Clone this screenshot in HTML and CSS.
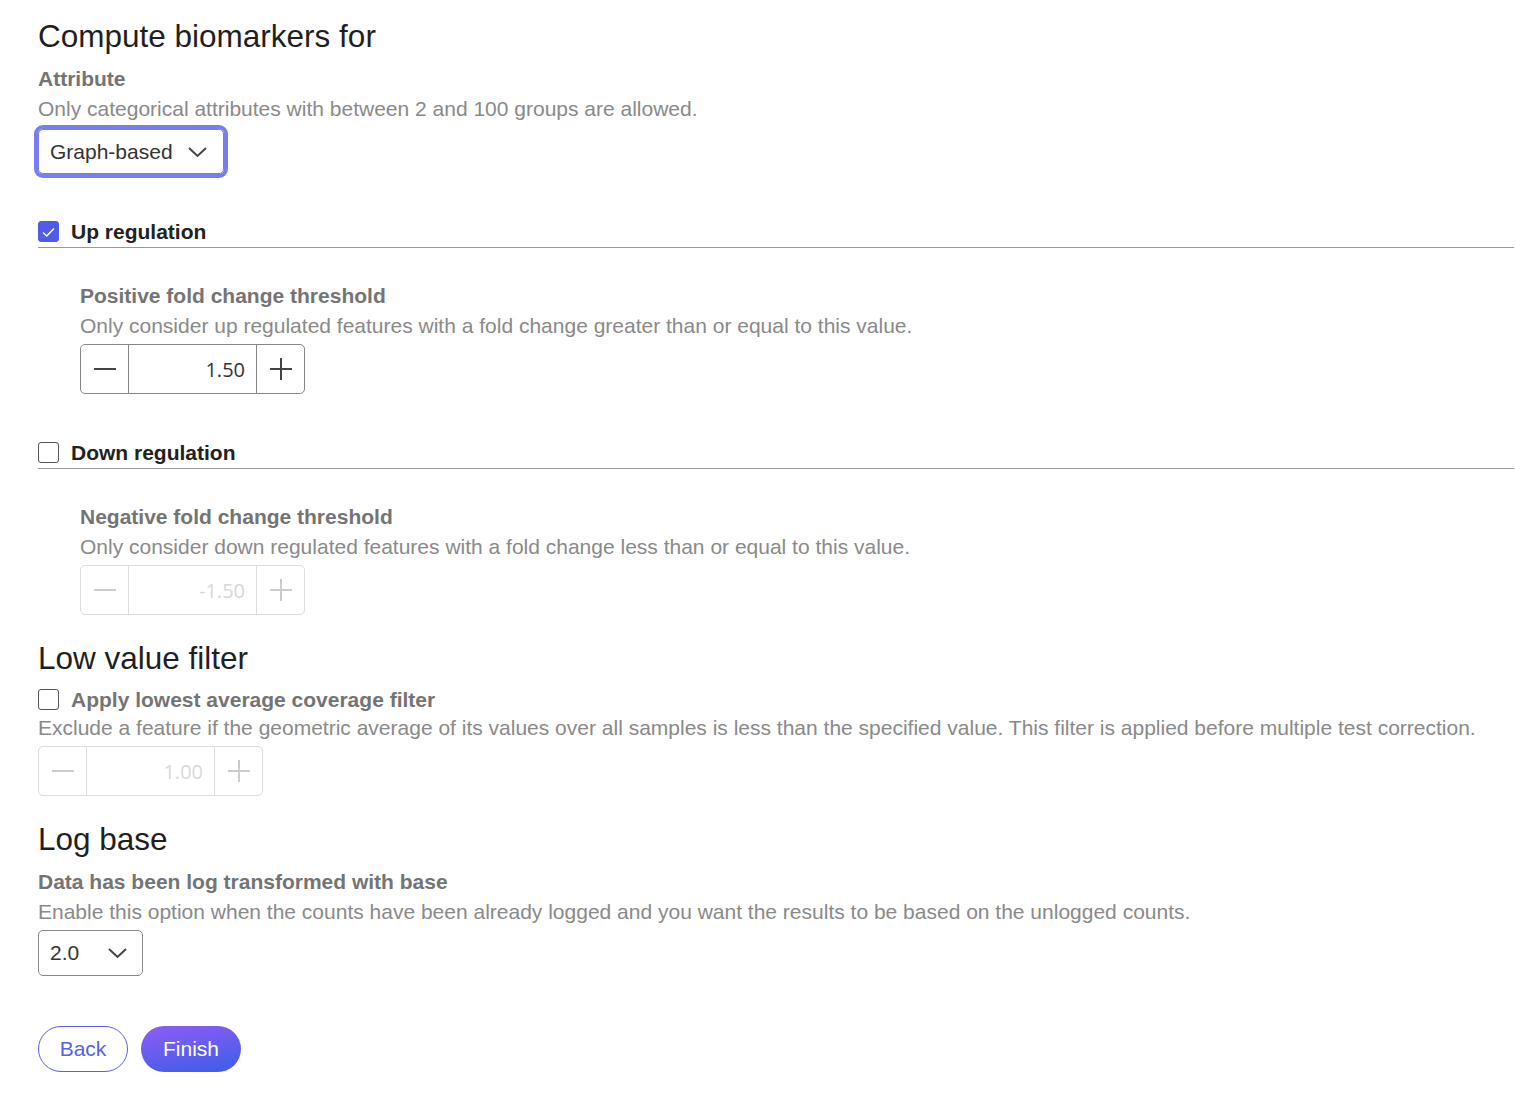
FILE: index.html
```html
<!DOCTYPE html>
<html lang="en">
  <head>
    <title>Compute biomarkers</title>
    <meta charset="utf-8">
    <link rel="stylesheet" href="styles.css">
  </head>
  <body>
  <div class="page">

    <h2 class="heading">Compute biomarkers for</h2>
    <div class="label">Attribute</div>
    <div class="desc">Only categorical attributes with between 2 and 100 groups are allowed.</div>
    <div class="select focused">
      <span>Graph-based</span>
      <svg class="chevron" width="19" height="12" viewBox="0 0 19 12"><path d="M1 2 L9.5 10 L18 2" fill="none" stroke="#444" stroke-width="2"/></svg>
    </div>

    <div class="check-row section first">
      <span class="box checked">
        <svg width="15" height="12" viewBox="0 0 15 12"><path d="M2 6.5 L5.8 10 L13 2.5" fill="none" stroke="#fff" stroke-width="1.6"/></svg>
      </span>
      <span class="check-title">Up regulation</span>
    </div>
    <div class="indent">
      <div class="label">Positive fold change threshold</div>
      <div class="desc">Only consider up regulated features with a fold change greater than or equal to this value.</div>
      <div class="stepper">
        <span class="step"><svg width="22" height="22" viewBox="0 0 22 22"><path d="M0 11 H22" stroke="#444" stroke-width="2"/></svg></span>
        <span class="value">1.50</span>
        <span class="step"><svg width="22" height="22" viewBox="0 0 22 22"><path d="M0 11 H22 M11 0 V22" stroke="#444" stroke-width="2"/></svg></span>
      </div>
    </div>

    <div class="check-row section">
      <span class="box"></span>
      <span class="check-title">Down regulation</span>
    </div>
    <div class="indent">
      <div class="label">Negative fold change threshold</div>
      <div class="desc">Only consider down regulated features with a fold change less than or equal to this value.</div>
      <div class="stepper disabled">
        <span class="step"><svg width="22" height="22" viewBox="0 0 22 22"><path d="M0 11 H22" stroke="#ccc" stroke-width="2"/></svg></span>
        <span class="value">-1.50</span>
        <span class="step"><svg width="22" height="22" viewBox="0 0 22 22"><path d="M0 11 H22 M11 0 V22" stroke="#ccc" stroke-width="2"/></svg></span>
      </div>
    </div>

    <h2 class="heading spaced">Low value filter</h2>
    <div class="check-row plain">
      <span class="box"></span>
      <span class="label">Apply lowest average coverage filter</span>
    </div>
    <div class="desc">Exclude a feature if the geometric average of its values over all samples is less than the specified value. This filter is applied before multiple test correction.</div>
    <div class="stepper disabled">
      <span class="step"><svg width="22" height="22" viewBox="0 0 22 22"><path d="M0 11 H22" stroke="#ccc" stroke-width="2"/></svg></span>
      <span class="value">1.00</span>
      <span class="step"><svg width="22" height="22" viewBox="0 0 22 22"><path d="M0 11 H22 M11 0 V22" stroke="#ccc" stroke-width="2"/></svg></span>
    </div>

    <h2 class="heading spaced">Log base</h2>
    <div class="label">Data has been log transformed with base</div>
    <div class="desc">Enable this option when the counts have been already logged and you want the results to be based on the unlogged counts.</div>
    <div class="select small">
      <span>2.0</span>
      <svg class="chevron" width="19" height="12" viewBox="0 0 19 12"><path d="M1 2 L9.5 10 L18 2" fill="none" stroke="#444" stroke-width="2"/></svg>
    </div>

    <div class="actions">
      <button class="btn back">Back</button>
      <button class="btn finish">Finish</button>
    </div>

  </div>
  </body>
</html>
```

FILE: styles.css
```css
  html {
    height: 100%;
  }
  body {
    margin: 0;
    padding: 0;
    background: #ffffff;
    color: #222222;
    font-family: "Liberation Sans", Arial, sans-serif;
    font-size: 21px;
    line-height: 30px;
  }

  .page {
    padding: 18px 0 0 38px;
  }

  .heading {
    font-size: 31.5px;
    font-weight: normal;
    line-height: 36px;
    margin: 0 0 10px 0;
    color: #1f1f1f;
  }
  .heading.spaced {
    margin-top: 25px;
  }

  .label {
    font-weight: bold;
    color: #747474;
  }

  .desc {
    color: #8a8a8a;
  }

  .select {
    display: inline-flex;
    align-items: center;
    gap: 29px;
    height: 46px;
    padding: 0 15px 0 11px;
    margin-top: 3px;
    border: 1px solid #888;
    border-radius: 5px;
    color: #333;
    box-sizing: border-box;
  }
  .select.focused {
    height: 45px;
    margin-top: 5px;
    gap: 15px;
    padding: 0 16px 0 11px;
    border-color: #767bef;
    box-shadow: 0 0 0 4px #787df0;
  }
  .chevron {
    display: block;
  }

  .check-row {
    display: flex;
    align-items: center;
    gap: 12px;
  }
  .check-row.section {
    margin: 44px 1px 0 0;
    border-bottom: 1px solid #999;
    height: 31px;
    box-sizing: border-box;
    padding-bottom: 1px;
  }
  .check-row.section.first {
    margin-top: 43px;
  }
  .check-row.plain {
    line-height: 27px;
    height: 27px;
  }
  .check-title {
    font-weight: bold;
    color: #222;
  }

  .box {
    width: 21px;
    height: 21px;
    box-sizing: border-box;
    border: 1px solid #555;
    border-radius: 3px;
    background: #fff;
    display: flex;
    align-items: center;
    justify-content: center;
    flex-shrink: 0;
  }
  .box.checked {
    background: #4f5ce9;
    border-color: #4f5ce9;
  }

  .indent {
    padding: 33px 0 0 42px;
  }

  .stepper {
    display: inline-flex;
    margin-top: 3px;
    height: 50px;
    border: 1px solid #888;
    border-radius: 5px;
    box-sizing: border-box;
    overflow: hidden;
  }
  .step {
    width: 47px;
    display: flex;
    align-items: center;
    justify-content: center;
  }
  .value {
    width: 129px;
    border-left: 1px solid #888;
    border-right: 1px solid #888;
    box-sizing: border-box;
    padding-right: 11px;
    text-align: right;
    font-family: "Open Sans", "Noto Sans", sans-serif;
    font-size: 20px;
    line-height: 50px;
    color: #333;
  }
  .stepper.disabled {
    border-color: #ddd;
  }
  .stepper.disabled .value {
    border-color: #ddd;
    color: #d8d8d8;
  }

  .actions {
    display: flex;
    gap: 13px;
    margin-top: 50px;
  }
  .btn {
    font-family: "Liberation Sans", Arial, sans-serif;
    font-size: 21px;
    height: 46px;
    border-radius: 23px;
    cursor: pointer;
    padding: 0;
  }
  .btn.back {
    width: 90px;
    background: #fff;
    color: #5a5fe8;
    border: 1px solid #5a5fe8;
  }
  .btn.finish {
    width: 100px;
    color: #fff;
    border: 0;
    background: linear-gradient(170deg, #8f5cf6, #3a5ee7);
  }
```
